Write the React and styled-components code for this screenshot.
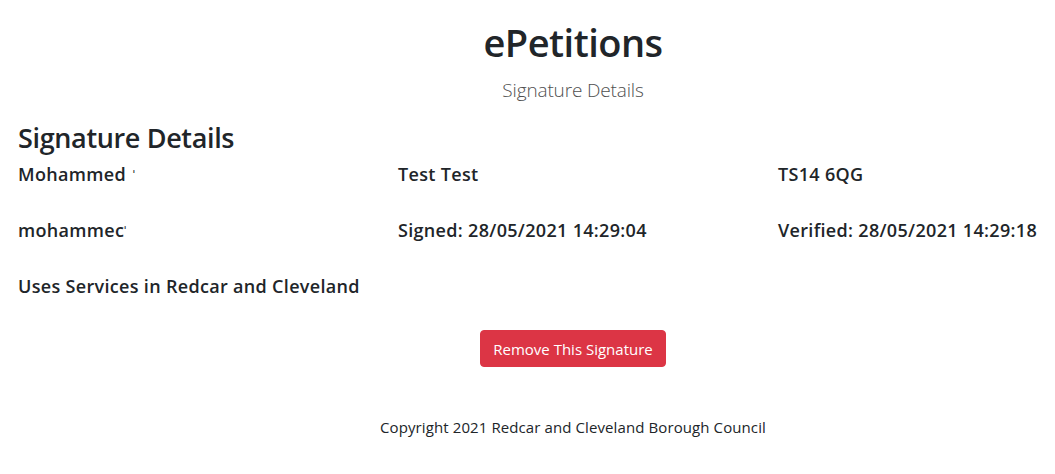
import React from "react";
import styled, { createGlobalStyle } from "styled-components";

const Global = createGlobalStyle`
  html, body { margin: 0; padding: 0; overflow: hidden; background: #fff; }
  body {
    font-family: "Open Sans", "Noto Sans", sans-serif;
    color: #212529;
  }
`;

const Container = styled.div`
  width: 1140px;
  margin-left: 3px;
  padding: 0 15px;
  box-sizing: border-box;
`;

const Header = styled.header`
  text-align: center;
  padding-top: 18px;
`;

const Title = styled.h1`
  margin: 0;
  font-size: 38px;
  letter-spacing: -0.5px;
  line-height: 48px;
  font-weight: 600;
`;

const Lead = styled.p`
  margin: 9px 0 0;
  font-size: 19px;
  letter-spacing: -0.15px;
  line-height: 30px;
  font-weight: 300;
  color: #4f4f4f;
`;

const SectionTitle = styled.h3`
  margin: 16px 0 8px;
  font-size: 27px;
  letter-spacing: -0.35px;
  line-height: 34px;
  font-weight: 600;
`;

const Row = styled.div`
  display: grid;
  grid-template-columns: repeat(3, 380px);
  margin: 0 -15px;
  height: 56px;
`;

const Cell = styled.div`
  padding: 0 15px;
  font-size: 18px;
  letter-spacing: 0.32px;
  line-height: 22px;
  font-weight: 600;
  white-space: nowrap;
`;

const Tick = styled.span`
  font-size: 10px;
  vertical-align: top;
  margin-left: ${(p) => p.$gap || 0}px;
`;

const Actions = styled.div`
  display: flex;
  justify-content: center;
  margin-top: -1px;
`;

const DangerButton = styled.button`
  font-family: inherit;
  background: #dc3545;
  color: #fff;
  border: 1px solid #dc3545;
  border-radius: 4px;
  font-size: 15px;
  line-height: 24px;
  padding: 6px 12px;
  height: 37px;
  cursor: pointer;
`;

const Footer = styled.footer`
  text-align: center;
  margin-top: 48px;
  font-size: 15px;
  letter-spacing: 0.1px;
  line-height: 24px;
`;

export default function App() {
  return (
    <>
      <Global />
      <Container>
        <Header>
          <Title>ePetitions</Title>
          <Lead>Signature Details</Lead>
        </Header>
        <SectionTitle>Signature Details</SectionTitle>
        <Row>
          <Cell>
            Mohammed<Tick $gap={7}>ˈ</Tick>
          </Cell>
          <Cell>Test Test</Cell>
          <Cell>TS14 6QG</Cell>
        </Row>
        <Row>
          <Cell>
            mohammec<Tick>ˈ</Tick>
          </Cell>
          <Cell>Signed: 28/05/2021 14:29:04</Cell>
          <Cell>Verified: 28/05/2021 14:29:18</Cell>
        </Row>
        <Row>
          <Cell>Uses Services in Redcar and Cleveland</Cell>
        </Row>
        <Actions>
          <DangerButton>Remove This Signature</DangerButton>
        </Actions>
        <Footer>Copyright 2021 Redcar and Cleveland Borough Council</Footer>
      </Container>
    </>
  );
}
